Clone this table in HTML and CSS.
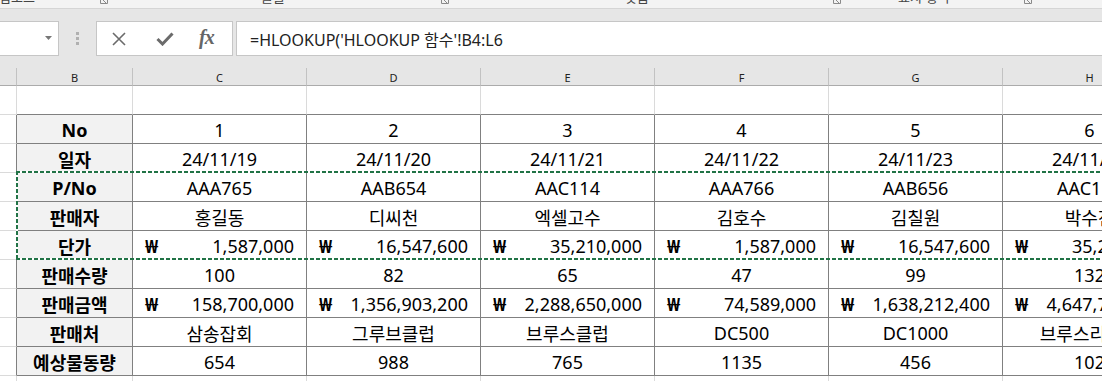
FILE: index.html
```html
<!DOCTYPE html>
<html lang="ko">
<head>
<meta charset="utf-8">
<title>HLOOKUP</title>
<link rel="stylesheet" href="styles.css">
</head>
<body>
<div class="ribbon">
  <span class="rb-label l1">클립보드</span>
  <svg class="rb-launch k1" width="8" height="5" viewBox="0 0 8 5"><path d="M0.5 0 V3.5 H7.5 V0" fill="none" stroke="#8a8a8a"/><path d="M3 0 L6 3" stroke="#8a8a8a"/></svg>
  <span class="rb-label l2">글꼴</span>
  <svg class="rb-launch k2" width="8" height="5" viewBox="0 0 8 5"><path d="M0.5 0 V3.5 H7.5 V0" fill="none" stroke="#8a8a8a"/><path d="M3 0 L6 3" stroke="#8a8a8a"/></svg>
  <span class="rb-label l3">맞춤</span>
  <svg class="rb-launch k3" width="8" height="5" viewBox="0 0 8 5"><path d="M0.5 0 V3.5 H7.5 V0" fill="none" stroke="#8a8a8a"/><path d="M3 0 L6 3" stroke="#8a8a8a"/></svg>
  <span class="rb-label l4">표시 형식</span>
  <svg class="rb-launch k4" width="8" height="5" viewBox="0 0 8 5"><path d="M0.5 0 V3.5 H7.5 V0" fill="none" stroke="#8a8a8a"/><path d="M3 0 L6 3" stroke="#8a8a8a"/></svg>
</div>

<div class="fbar">
  <div class="namebox">
    <svg width="7" height="4" viewBox="0 0 7 4"><path d="M0 0 H7 L3.5 4 Z" fill="#777"/></svg>
  </div>
  <div class="grip"><i></i><i></i><i></i></div>
  <div class="fxbox">
    <svg class="ic-x" width="16" height="14" viewBox="0 0 16 14"><path d="M2 1 L14 13 M14 1 L2 13" stroke="#6b6b6b" stroke-width="1.6" fill="none"/></svg>
    <svg class="ic-ok" width="18" height="14" viewBox="0 0 18 14"><path d="M1.5 7 L6.5 12 L16.5 1.5" stroke="#6b6b6b" stroke-width="3" fill="none"/></svg>
    <span class="fx">fx</span>
  </div>
  <div class="finput">=HLOOKUP('HLOOKUP 함수'!B4:L6</div>
</div>

<div class="sheet">
  <div class="row hdr">
    <div class="c a"></div><div class="c b">B</div><div class="c v">C</div><div class="c v">D</div><div class="c v">E</div><div class="c v">F</div><div class="c v">G</div><div class="c v">H</div>
  </div>
  <div class="row top">
    <div class="c a"></div><div class="c b"></div><div class="c v"></div><div class="c v"></div><div class="c v"></div><div class="c v"></div><div class="c v"></div><div class="c v"></div>
  </div>
  <div class="row t">
    <div class="c a"></div><div class="c b lab">No</div><div class="c v">1</div><div class="c v">2</div><div class="c v">3</div><div class="c v">4</div><div class="c v">5</div><div class="c v">6</div>
  </div>
  <div class="row t">
    <div class="c a"></div><div class="c b lab">일자</div><div class="c v">24/11/19</div><div class="c v">24/11/20</div><div class="c v">24/11/21</div><div class="c v">24/11/22</div><div class="c v">24/11/23</div><div class="c v">24/11/24</div>
  </div>
  <div class="row t">
    <div class="c a"></div><div class="c b lab">P/No</div><div class="c v">AAA765</div><div class="c v">AAB654</div><div class="c v">AAC114</div><div class="c v">AAA766</div><div class="c v">AAB656</div><div class="c v">AAC115</div>
  </div>
  <div class="row t">
    <div class="c a"></div><div class="c b lab">판매자</div><div class="c v">홍길동</div><div class="c v">디씨천</div><div class="c v">엑셀고수</div><div class="c v">김호수</div><div class="c v">김칠원</div><div class="c v">박수진</div>
  </div>
  <div class="row t">
    <div class="c a"></div><div class="c b lab">단가</div>
    <div class="c v cur"><span class="won">₩</span><span>1,587,000</span></div>
    <div class="c v cur"><span class="won">₩</span><span>16,547,600</span></div>
    <div class="c v cur"><span class="won">₩</span><span>35,210,000</span></div>
    <div class="c v cur"><span class="won">₩</span><span>1,587,000</span></div>
    <div class="c v cur"><span class="won">₩</span><span>16,547,600</span></div>
    <div class="c v cur"><span class="won">₩</span><span>35,210,000</span></div>
  </div>
  <div class="row t">
    <div class="c a"></div><div class="c b lab">판매수량</div><div class="c v">100</div><div class="c v">82</div><div class="c v">65</div><div class="c v">47</div><div class="c v">99</div><div class="c v">132</div>
  </div>
  <div class="row t">
    <div class="c a"></div><div class="c b lab">판매금액</div>
    <div class="c v cur"><span class="won">₩</span><span>158,700,000</span></div>
    <div class="c v cur"><span class="won">₩</span><span>1,356,903,200</span></div>
    <div class="c v cur"><span class="won">₩</span><span>2,288,650,000</span></div>
    <div class="c v cur"><span class="won">₩</span><span>74,589,000</span></div>
    <div class="c v cur"><span class="won">₩</span><span>1,638,212,400</span></div>
    <div class="c v cur"><span class="won">₩</span><span>4,647,720,000</span></div>
  </div>
  <div class="row t">
    <div class="c a"></div><div class="c b lab">판매처</div><div class="c v">삼송잡회</div><div class="c v">그루브클럽</div><div class="c v">브루스클럽</div><div class="c v">DC500</div><div class="c v">DC1000</div><div class="c v">브루스리클럽</div>
  </div>
  <div class="row t">
    <div class="c a"></div><div class="c b lab">예상물동량</div><div class="c v">654</div><div class="c v">988</div><div class="c v">765</div><div class="c v">1135</div><div class="c v">456</div><div class="c v">102</div>
  </div>
  <div class="row">
    <div class="c a"></div><div class="c b"></div><div class="c v"></div><div class="c v"></div><div class="c v"></div><div class="c v"></div><div class="c v"></div><div class="c v"></div>
  </div>
  <div class="marquee"></div>
</div>
</body>
</html>
```

FILE: styles.css
```css
* { box-sizing: border-box; }
html, body { margin: 0; padding: 0; }
body {
  width: 1102px;
  height: 381px;
  overflow: hidden;
  background: #ffffff;
  font-family: "Noto Sans", "Noto Sans CJK KR", sans-serif;
  color: #000;
}

/* ribbon remnant */
.ribbon {
  height: 9px;
  background: #f3f3f3;
  border-bottom: 1px solid #d5d5d5;
  overflow: hidden;
  display: flex;
  align-items: flex-start;
}
.rb-label {
  flex: none;
  font-family: "Noto Sans CJK KR", sans-serif;
  font-size: 13px;
  line-height: 13px;
  margin-top: -10px;
  color: #444;
  white-space: nowrap;
}
.rb-launch { flex: none; display: block; }
.l1 { margin-left: -13px; width: 52px; }
.k1 { margin-left: 61px; }
.l2 { margin-left: 153px; width: 26px; }
.k2 { margin-left: 154px; }
.l3 { margin-left: 176px; width: 26px; }
.k3 { margin-left: 182px; }
.l4 { margin-left: 57px; width: 66px; }
.k4 { margin-left: 60px; }

/* formula bar */
.fbar {
  height: 59px;
  background: #e6e6e6;
  display: flex;
  align-items: flex-start;
  padding-top: 12px;
}
.namebox {
  flex: none;
  width: 60px;
  height: 35px;
  margin-left: -1px;
  background: #fff;
  border: 1px solid #c6c6c6;
  display: flex;
  align-items: center;
  justify-content: flex-end;
  padding-right: 6px;
}
.namebox svg { display: block; margin-top: -1px; }
.grip {
  flex: none;
  width: 37px;
  height: 35px;
  display: flex;
  flex-direction: column;
  align-items: center;
  justify-content: center;
  gap: 2px;
}
.grip i {
  display: block;
  width: 3px;
  height: 3px;
  background: #b0b0b0;
}
.fxbox {
  flex: none;
  width: 137px;
  height: 35px;
  background: #fff;
  border: 1px solid #c6c6c6;
  display: flex;
  align-items: center;
  padding-left: 14px;
}
.fxbox svg { display: block; flex: none; }
.ic-ok { margin-left: 29px; }
.fx {
  margin-left: 25px;
  font-family: "Liberation Serif", "DejaVu Serif", serif;
  font-style: italic;
  font-weight: 700;
  font-size: 20px;
  color: #666;
  letter-spacing: -1px;
  margin-top: -2px;
}
.finput {
  flex: 1;
  margin-left: 3px;
  height: 35px;
  background: #fff;
  border: 1px solid #c6c6c6;
  border-right: none;
  padding-left: 13px;
  display: flex;
  align-items: center;
  font-size: 16px;
  color: #222;
  white-space: nowrap;
}

/* sheet */
.sheet { position: relative; }
.row { display: flex; height: 29px; }
.c {
  flex: none;
  height: 100%;
  border-right: 1px solid #dadada;
  border-bottom: 1px solid #dadada;
  display: flex;
  align-items: center;
  justify-content: center;
  font-size: 18px;
  white-space: nowrap;
  overflow: hidden;
}
.a { width: 17px; }
.b { width: 116px; }
.v { width: 174px; }

.hdr { height: 18px; background: #e6e6e6; }
.hdr .c {
  border-right-color: #c2c2c2;
  border-bottom-color: #ababab;
  font-size: 11px;
  color: #222;
  padding-top: 1px;
}

.top .b, .top .v { border-bottom-color: #808080; }

.t .a { border-right-color: #808080; }
.t .b, .t .v { border-right-color: #808080; border-bottom-color: #808080; }
.t .lab { background: #f2f2f2; font-weight: 700; }
.t .c { padding-top: 2px; }

.cur {
  justify-content: space-between;
  padding-left: 12px;
  padding-right: 12px;
}
.won { font-weight: 700; }

.marquee {
  position: absolute;
  top: 103px;
  left: 16px;
  right: -20px;
  height: 89px;
  pointer-events: none;
  background:
    repeating-linear-gradient(90deg, #217346 0 4px, #ffffff 4px 6px) left top / 100% 2px no-repeat,
    repeating-linear-gradient(90deg, #217346 0 4px, #ffffff 4px 6px) left bottom / 100% 2px no-repeat,
    repeating-linear-gradient(180deg, #217346 0 4px, #ffffff 4px 6px) left top / 2px 100% no-repeat;
}
```
